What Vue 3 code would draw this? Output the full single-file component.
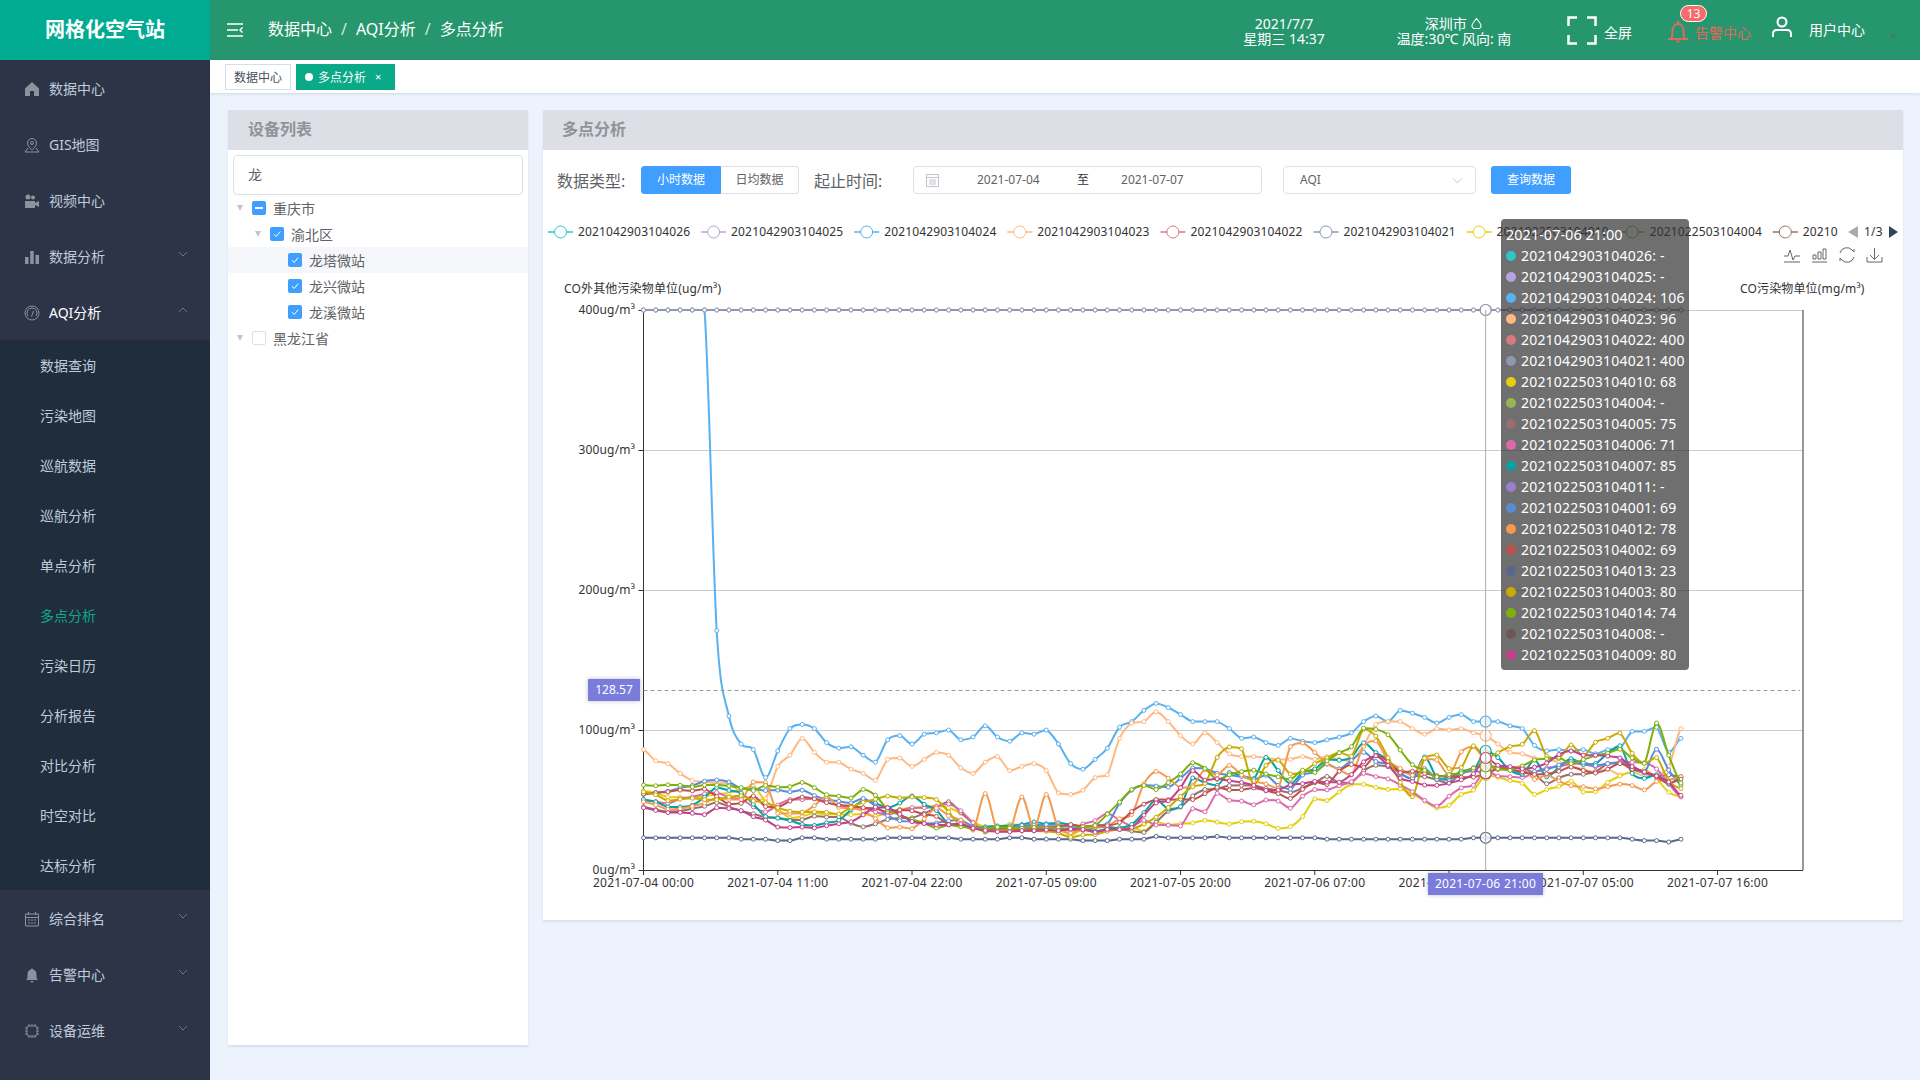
<template>
  <div class="app">
    <aside class="sidebar">
      <div class="logo">网格化空气站</div>
      <template v-for="m in menu" :key="m.label">
        <div class="menu-item" :class="{ open: m.subs }">
          <svg class="micon" :class="m.kind" viewBox="0 0 16 16"><path :d="icons[m.icon]" /></svg>
          <span>{{ m.label }}</span>
          <svg v-if="m.chev" class="chev" viewBox="0 0 10 6"><path :d="m.subs ? 'M1 5L5 1L9 5' : 'M1 1L5 5L9 1'" /></svg>
        </div>
        <div v-if="m.subs" class="submenu">
          <div v-for="s in m.subs" :key="s" class="sub-item" :class="{ on: s === '多点分析' }">{{ s }}</div>
        </div>
      </template>
    </aside>

    <div class="main">
      <header class="topbar">
        <svg class="burger" viewBox="0 0 16 14"><path d="M0 1h16M0 7h11M0 13h16M15.5 4.5L13 7l2.5 2.5" /></svg>
        <nav class="crumbs">
          <span>数据中心</span><i>/</i><span>AQI分析</span><i>/</i><span>多点分析</span>
        </nav>
        <div class="dt">2021/7/7<br />星期三 14:37</div>
        <div class="weather">
          深圳市
          <svg class="cloud" viewBox="0 0 14 14"><path d="M7 1.5L11 7a4 4 0 0 1-1 5.5H4A4 4 0 0 1 3 7z" /></svg>
          <br />温度:30℃ 风向: 南
        </div>
        <svg class="fs" viewBox="0 0 30 29"><path d="M10 1.5H1.5V10M20 1.5h8.500V10M10 27.500H1.500V19M20 27.500h8.500V19" /></svg>
        <span class="fs-label">全屏</span>
        <div class="alarm">
          <svg class="bell" viewBox="0 0 22 24"><path d="M1 20h20M4 20c1.500-2 1.500-4 1.500-8 0-4 2-7 5.500-7s5.500 3 5.500 7c0 4 0 6 1.500 8M11 2v3M9.500 22.500h3" /></svg>
          <span>告警中心</span>
          <b class="badge">13</b>
        </div>
        <svg class="user" viewBox="0 0 20 22"><path d="M10 1.500a4.500 4.500 0 1 1 0 9a4.500 4.500 0 0 1 0-9zM1 21v-3c0-3 2-4 4-4h10c2 0 4 1 4 4v3" /></svg>
        <span class="user-label">用户中心</span>
        <span class="caret"></span>
      </header>

      <div class="tabs">
        <div class="tab">数据中心</div>
        <div class="tab active"><i class="dot"></i><span class="tab-text">多点分析</span><span class="x">×</span></div>
      </div>

      <div class="content">
        <section class="panel left">
          <h3 class="panel-head">设备列表</h3>
          <div class="search">龙</div>
          <div class="tree">
            <div v-for="n in tree" :key="n.label" class="row" :class="['lv' + n.lv, { hover: n.hover }]">
              <span class="arrow"><i v-if="n.arrow"></i></span>
              <span class="cb" :class="n.state">
                <svg v-if="n.state === 'checked'" viewBox="0 0 14 14"><path d="M4 7.200L6.200 9.500L10.200 4.500" /></svg>
              </span>
              <span class="lbl">{{ n.label }}</span>
            </div>
          </div>
        </section>

        <section class="panel right">
          <h3 class="panel-head">多点分析</h3>
          <div class="controls">
            <span class="ctl-label">数据类型:</span>
            <div class="btn-group">
              <span class="seg on">小时数据</span>
              <span class="seg">日均数据</span>
            </div>
            <span class="ctl-label second">起止时间:</span>
            <div class="range">
              <svg class="cal" viewBox="0 0 13 14"><path d="M.5 1.500h12v12H.5zM.5 4.500h12M3 7h7M3 9h7M3 11h7" /></svg>
              <span class="d1">2021-07-04</span>
              <span class="to">至</span>
              <span class="d2">2021-07-07</span>
            </div>
            <div class="select">
              <span>AQI</span>
              <svg class="sel-arrow" viewBox="0 0 12 7"><path d="M1 1l5 5 5-5" /></svg>
            </div>
            <div class="query">查询数据</div>
          </div>

          <div class="chart">
            <svg class="plot" viewBox="543 210 1360 710" width="1360" height="710">
              <g v-for="(l, i) in legend" :key="i">
                <line :x1="l.x" :x2="l.x + 25" y1="232" y2="232" :stroke="l.color" stroke-width="1.500" />
                <circle :cx="l.x + 12.5" cy="232" r="6" fill="#fff" :stroke="l.color" stroke-width="1" />
                <text :x="l.x + 30" y="236" class="t12 lg">{{ l.name }}</text>
              </g>
              <path d="M1858 226v12l-10-6z" fill="#aaa" />
              <text x="1864" y="236" class="t12 lg">1/3</text>
              <path d="M1889 226v12l9-6z" fill="#2f4554" />

              <g class="tool">
                <path d="M1784 262h16M1784 256h4l2-6 3 10 2-4h5" />
                <path d="M1812 262h15M1813 259v-4h3v4zM1818 259v-7h3v7zM1823 259v-10h3v10z" />
                <path d="M1840 253a7 7 0 0 1 12-3l2 2v-3M1854 257a7 7 0 0 1-12 3l-2-2v3" />
                <path d="M1874.500 248v11M1870 255l4.500 4.500 4.500-4.500M1867 257v5h15v-5" />
              </g>

              <text x="564" y="293" class="t12 lg">CO外其他污染物单位(ug/m³)</text>
              <text x="1740" y="293" class="t12 lg">CO污染物单位(mg/m³)</text>

              <line v-for="y in [310, 450, 590, 730]" :key="y" x1="643.500" x2="1803" :y1="y + 0.5" :y2="y + 0.5" stroke="#ccc" />
              <line x1="643.500" x2="643.500" y1="310" y2="870" stroke="#333" />
              <line x1="1803" x2="1803" y1="310" y2="870" stroke="#333" />
              <line x1="643.500" x2="1803" y1="870.500" y2="870.500" stroke="#333" />
              <g v-for="t in yTicks" :key="t.label">
                <line x1="638.500" x2="643.500" :y1="t.y + 0.5" :y2="t.y + 0.5" stroke="#333" />
                <text x="635" :y="t.y + 4" text-anchor="end" class="t12 ay">{{ t.label }}</text>
              </g>
              <g v-for="t in xTicks" :key="t.label">
                <line :x1="t.x" :x2="t.x" y1="870" y2="875" stroke="#333" />
                <text :x="t.x" y="887" text-anchor="middle" class="t12 ax">{{ t.label }}</text>
              </g>

              <g v-for="s in series" :key="s.color" fill="none">
                <path :d="s.path" :stroke="s.color" stroke-width="2" />
                <circle v-for="p in s.points" :key="p[0]" :cx="p[0]" :cy="p[1]" r="2" fill="#fff" :stroke="s.color" stroke-width="1" />
              </g>

              <line x1="643.500" x2="1800" y1="690.500" y2="690.500" stroke="#999" stroke-dasharray="4 3" />
              <g v-for="s in series" :key="'h' + s.color">
                <circle :cx="cursorX" :cy="s.hover" r="5.500" fill="#fff" fill-opacity="0.8" :stroke="s.color" stroke-width="1.200" />
              </g>
              <line :x1="cursorX" :x2="cursorX" y1="310" y2="870" stroke="#aaa" />

              <rect x="588" y="679" width="52" height="22" fill="#7b7bdc" class="pill" />
              <text x="614" y="694" text-anchor="middle" class="t12 white">128.57</text>
              <rect x="1428" y="873" width="115" height="22" fill="#7b7bdc" class="pill" />
              <text x="1485.500" y="888" text-anchor="middle" class="t12 white wide">2021-07-06 21:00</text>
            </svg>

            <div class="tooltip">
              <div class="tip-title">2021-07-06 21:00</div>
              <div v-for="r in tipRows" :key="r[0]" class="tip-row">
                <i :style="{ background: r[2] }"></i>{{ r[0] }}: {{ r[1] }}
              </div>
            </div>
          </div>
        </section>
      </div>
    </div>
  </div>
</template>

<script setup>
const icons = {
  home: 'M8 1L1 7.500V15H6V10H10V15H15V7.500Z',
  pin: 'M8 1.500a4.500 4.500 0 0 1 4.500 4.500c0 2.500-2.500 5-4.500 7-2-2-4.500-4.500-4.500-7A4.500 4.500 0 0 1 8 1.500zM8 4.500a1.500 1.500 0 1 0 0 3a1.500 1.500 0 0 0 0-3zM4 11L1 15H15L12 11',
  video: 'M1 8h10v7H1zM11 10l4-2v6l-4-2zM4 1.500a2.500 2.500 0 1 1 0 5a2.500 2.500 0 0 1 0-5zM9 2.500a2 2 0 1 1 0 4a2 2 0 0 1 0-4z',
  bars: 'M1 8h3.500v7H1zM6.200 2h3.500v13H6.200zM11.500 6H15v9h-3.500z',
  gauge: 'M8 1a7 7 0 1 1 0 14a7 7 0 0 1 0-14zM8 3a5 5 0 0 0-4 8M8 3a5 5 0 0 1 4 8M7.500 11.500L9.500 6',
  calendar: 'M1.500 3h13v12h-13zM1.500 6.500h13M4.500 1v3M11.500 1v3M4 9h2M7 9h2M10 9h2M4 12h2M7 12h2M10 12h2',
  bell: 'M8 1.500c-.6 0-1 .4-1 1C4.500 3.200 3.500 5 3.500 7.500V11L2 13h12l-1.500-2V7.500C12.500 5 11.500 3.200 9 2.500c0-.6-.4-1-1-1zM6.500 14h3a1.500 1.500 0 0 1-3 0z',
  chip: 'M4 3h8l1 1v8l-1 1H4l-1-1V4zM1 5h2M1 8h2M1 11h2M13 5h2M13 8h2M13 11h2M5 1v2M8 1v2M11 1v2M5 13v2M8 13v2M11 13v2'
}

const menu = [
  { label: '数据中心', icon: 'home', kind: 'fill' },
  { label: 'GIS地图', icon: 'pin', kind: 'line' },
  { label: '视频中心', icon: 'video', kind: 'fill' },
  { label: '数据分析', icon: 'bars', kind: 'fill', chev: true },
  {
    label: 'AQI分析',
    icon: 'gauge',
    kind: 'line',
    chev: true,
    subs: ['数据查询', '污染地图', '巡航数据', '巡航分析', '单点分析', '多点分析', '污染日历', '分析报告', '对比分析', '时空对比', '达标分析']
  },
  { label: '综合排名', icon: 'calendar', kind: 'line', chev: true },
  { label: '告警中心', icon: 'bell', kind: 'fill', chev: true },
  { label: '设备运维', icon: 'chip', kind: 'line', chev: true },
  { label: '', icon: 'calendar', kind: 'line' }
]

const tree = [
  { label: '重庆市', lv: 1, arrow: true, state: 'half' },
  { label: '渝北区', lv: 2, arrow: true, state: 'checked' },
  { label: '龙塔微站', lv: 3, state: 'checked', hover: true },
  { label: '龙兴微站', lv: 3, state: 'checked' },
  { label: '龙溪微站', lv: 3, state: 'checked' },
  { label: '黑龙江省', lv: 1, arrow: true, state: 'empty' }
]

const legendColors = ['#2ec7c9', '#b6a2de', '#5ab1ef', '#ffb980', '#d87a80', '#8d98b3', '#e5cf0d', '#97b552', '#95706d']
const legendNames = ['2021042903104026', '2021042903104025', '2021042903104024', '2021042903104023', '2021042903104022', '2021042903104021', '2021022503104010', '2021022503104004', '20210']
const legend = legendNames.map((name, i) => ({ name, color: legendColors[i], x: 548 + i * 153.1 }))

const yTicks = [
  { label: '400ug/m³', y: 310 },
  { label: '300ug/m³', y: 450 },
  { label: '200ug/m³', y: 590 },
  { label: '100ug/m³', y: 730 },
  { label: '0ug/m³', y: 870 }
]

const step = 1159.5 / 95
const X0 = 643.5
const cursorX = X0 + 69 * step
const xLabels = ['07-04 00:00', '07-04 11:00', '07-04 22:00', '07-05 09:00', '07-05 20:00', '07-06 07:00', '07-06 18:00', '07-07 05:00', '07-07 16:00']
const xTicks = xLabels.map((l, i) => ({ label: '2021-' + l, x: X0 + i * 11 * step }))

function jitter(i, seed) {
  const v = Math.sin(i * 12.9898 + seed * 78.233) * 43758.5453
  return (v - Math.floor(v)) * 2 - 1
}
function line(pairs, seed, amp = 1.5) {
  const out = []
  for (let i = 0; i < 86; i++) {
    let k = 0
    while (k < pairs.length - 4 && pairs[k + 2] < i) k += 2
    const a = pairs[k]
    const b = pairs[k + 2]
    const t = Math.min(1, Math.max(0, (i - a) / (b - a)))
    const base = pairs[k + 1] + (pairs[k + 3] - pairs[k + 1]) * t
    out.push(i === 69 ? base : base + amp * jitter(i, seed))
  }
  return out
}

const blue = [400, 400, 400, 400, 400, 400, 171, 110, 90, 86, 66, 85, 101, 104, 101, 91, 87, 88, 82, 77, 93, 96, 90, 97, 98, 100, 93, 95, 103, 95, 92, 98, 97, 100, 90, 76, 72, 79, 87, 102, 106, 114, 119, 116, 111, 106, 106, 106, 101, 94, 95, 91, 89, 94, 92, 91, 93, 95, 98, 106, 110, 106, 114, 112, 109, 105, 109, 111, 106, 106, 106, 103, 101, 89, 85, 86, 85, 86, 83, 86, 87, 99, 99, 102, 84, 94]
const peach = [86, 78, 76, 69, 64, 63, 62, 62, 55, 50, 51, 74, 82, 94, 84, 77, 77, 72, 69, 64, 79, 80, 74, 79, 84, 82, 73, 69, 77, 81, 71, 74, 76, 71, 55, 54, 57, 66, 68, 94, 105, 106, 113, 106, 96, 90, 98, 91, 83, 81, 81, 80, 79, 79, 81, 79, 81, 79, 78, 89, 104, 106, 106, 101, 97, 101, 100, 101, 98, 96, 90, 84, 83, 80, 79, 77, 74, 72, 70, 72, 68, 70, 67, 68, 74, 101]
const flat400 = new Array(86).fill(400)
const slate = [23, 23, 23, 23, 23, 23, 23, 23, 22, 22, 22, 21, 21, 23, 23, 22, 22, 22, 22, 22, 23, 23, 23, 23, 23, 23, 22, 22, 22, 22, 23, 23, 22, 22, 22, 22, 21, 21, 21, 22, 22, 22, 24, 23, 23, 23, 23, 24, 23, 23, 23, 23, 23, 23, 23, 23, 22, 22, 22, 22, 22, 22, 22, 22, 22, 22, 22, 22, 23, 23, 23, 23, 23, 23, 23, 23, 23, 23, 23, 23, 23, 22, 21, 21, 20, 22]

const raw = [
  ['#5ab1ef', blue],
  ['#ffb980', peach],
  ['#d87a80', flat400],
  ['#8d98b3', flat400],
  ['#e5cf0d', line([0,57,2,52,5,52,7,55,9,60,10,50,12,37,14,40,17,40,19,38,22,45,25,45,26,40,28,30,30,33,32,31,34,30,35,26,36,29,38,31,40,30,41,27,42,34,43,33,45,33,46,35,47,35,48,33,50,34,51,33,52,30,53,31,54,39,55,50,56,50,57,56,58,61,59,61,60,59,62,57,64,50,65,44,66,47,67,53,68,57,69,68,70,66,72,62,73,55,74,57,75,60,76,64,77,55,78,55,79,63,80,68,82,72,83,65,84,55,85,52], 1, 1)],
  ['#95706d', line([0,46,2,42,4,43,6,48,8,42,10,38,12,35,14,38,16,37,18,30,20,36,22,38,25,48,28,27,30,30,33,29,36,28,38,31,40,28,41,27,42,35,43,42,44,45,45,52,46,58,47,57,48,60,50,60,52,57,53,56,55,62,56,66,57,62,58,63,59,70,60,74,62,72,63,68,65,64,66,62,67,70,69,75,70,73,72,72,73,68,74,62,76,68,78,70,79,75,80,77,82,70,83,68,85,66], 2, 1)],
  ['#dc69aa', line([0,50,2,48,4,52,6,55,8,50,10,42,12,50,14,52,16,46,18,45,20,40,22,44,24,46,25,48,28,28,30,30,33,32,35,28,37,36,38,40,40,32,41,35,42,33,43,33,44,32,45,44,46,42,47,55,48,50,49,49,50,47,51,50,52,49,53,44,54,52,55,57,56,58,57,60,58,63,59,68,60,67,61,66,62,60,63,55,64,49,65,45,66,53,67,58,68,60,69,71,70,68,72,66,74,72,76,76,78,74,80,78,82,76,83,72,84,62,85,52], 3, 1)],
  ['#07a2a4', line([0,51,2,45,4,47,6,58,8,56,10,38,12,35,14,32,16,36,18,50,20,44,22,52,24,42,25,33,27,30,30,32,33,34,35,32,37,28,40,32,42,50,43,44,44,46,45,65,46,62,47,60,48,70,50,66,51,80,52,72,53,62,54,70,55,72,56,80,57,78,58,80,59,90,60,84,61,78,62,70,63,65,64,80,65,66,66,65,67,70,68,72,69,85,70,80,71,72,72,68,73,78,74,66,75,74,76,80,77,76,78,76,79,84,80,88,81,70,82,66,83,68,84,62,85,66], 4, 1)],
  ['#588dd5', line([0,55,3,58,4,61,5,64,6,64,7,62,8,58,10,56,11,57,12,55,13,57,15,50,17,48,18,52,19,45,20,38,21,35,23,33,24,33,26,36,28,27,30,30,32,32,34,32,36,30,38,32,39,48,40,58,41,60,42,60,43,60,44,66,45,72,46,72,47,70,48,68,49,66,50,64,51,68,52,60,53,58,54,68,55,70,56,76,57,72,58,78,59,85,60,78,61,76,62,70,63,66,64,72,65,64,66,66,67,68,68,70,69,69,70,72,72,70,74,72,76,78,78,74,80,76,82,70,83,86,84,72,85,60], 5, 1)],
  ['#f5994e', line([0,48,2,44,4,45,6,52,8,50,9,63,10,62,11,40,13,40,15,52,16,45,18,42,20,30,22,30,24,44,26,35,27,28,28,54,29,28,30,28,31,52,32,30,33,54,34,30,35,27,37,30,38,32,40,40,41,62,42,70,43,66,44,58,45,60,46,72,47,68,48,74,49,68,50,64,52,58,53,88,54,90,55,84,56,76,57,72,58,68,59,88,60,92,61,78,62,72,63,68,64,80,65,78,66,68,67,84,68,88,69,78,70,72,72,74,73,64,74,68,76,60,78,58,80,62,82,58,83,64,85,66], 6, 0.8)],
  ['#c05050', line([0,55,1,56,2,55,3,57,4,56,5,58,6,52,7,48,8,47,9,52,10,46,11,44,12,50,13,52,14,50,16,46,18,44,20,42,22,43,24,38,25,32,27,30,30,30,33,30,35,32,37,31,39,34,40,42,41,47,42,50,43,51,45,51,47,60,48,57,50,58,52,54,53,52,55,62,56,62,57,70,58,75,59,73,60,82,61,78,62,70,64,70,66,66,68,67,69,69,70,72,72,70,74,68,76,74,78,70,80,76,82,70,84,62,85,64], 7, 1)],
  ['#59678c', slate],
  ['#c9ab00', line([0,56,2,50,4,52,6,50,8,53,9,50,10,48,12,42,14,42,16,40,18,48,20,52,22,52,24,50,26,32,28,27,30,28,33,28,35,24,37,26,40,30,41,32,42,38,43,44,45,60,46,62,47,80,48,88,49,86,50,60,51,74,52,78,53,68,54,70,55,76,56,80,57,84,58,82,59,100,60,96,61,80,62,62,63,52,64,80,65,82,66,72,67,74,68,88,69,80,70,84,71,88,72,90,73,100,74,82,75,80,76,90,77,82,78,92,79,94,80,98,81,84,82,76,83,80,84,64,85,58], 8, 0.8)],
  ['#7eb00a', line([0,60,2,61,4,60,6,61,8,59,9,57,10,60,12,59,13,62,15,54,17,52,18,58,19,53,20,44,22,36,24,30,25,32,27,30,30,30,33,30,35,29,37,32,39,48,40,58,41,60,42,57,44,68,45,76,46,72,47,64,48,68,49,70,50,72,52,66,53,64,54,72,55,70,56,78,58,88,59,102,60,100,61,96,63,76,65,66,67,70,69,74,71,72,73,78,75,80,76,76,78,82,80,86,81,80,82,76,83,105,84,82,85,62], 9, 0.8)],
  ['#c14089', line([0,44,2,40,4,41,5,40,6,44,7,44,8,42,10,36,11,30,13,30,15,31,17,34,18,40,19,45,20,44,22,35,24,32,26,32,27,30,30,27,33,28,35,29,37,27,40,30,41,40,42,48,43,50,44,58,45,70,46,64,47,66,48,64,49,62,50,60,51,56,52,58,54,62,55,64,56,62,57,62,58,68,59,78,60,82,61,74,62,66,64,60,66,62,68,68,69,80,70,74,72,72,74,76,75,82,76,84,78,82,80,80,81,74,83,68,84,62,85,53], 10, 1)]
]

const yOf = (v) => 870 - v * 1.4

function smooth(pts) {
  let d = `M${pts[0][0].toFixed(1)} ${pts[0][1].toFixed(1)}`
  const clamp = (v, a, b) => Math.min(Math.max(a, b), Math.max(Math.min(a, b), v))
  for (let i = 0; i < pts.length - 1; i++) {
    const p0 = pts[Math.max(0, i - 1)]
    const p1 = pts[i]
    const p2 = pts[i + 1]
    const p3 = pts[Math.min(pts.length - 1, i + 2)]
    const c1y = clamp(p1[1] + (p2[1] - p0[1]) / 6, p1[1], p2[1])
    const c2y = clamp(p2[1] - (p3[1] - p1[1]) / 6, p1[1], p2[1])
    d += `C${(p1[0] + step / 3).toFixed(1)} ${c1y.toFixed(1)} ${(p2[0] - step / 3).toFixed(1)} ${c2y.toFixed(1)} ${p2[0].toFixed(1)} ${p2[1].toFixed(1)}`
  }
  return d
}

const series = raw.map(([color, vals]) => {
  const points = vals.map((v, i) => [X0 + i * step, yOf(v)])
  return { color, points, path: smooth(points), hover: yOf(vals[69]) }
})

const tipRows = [
  ['2021042903104026', '-', '#2ec7c9'],
  ['2021042903104025', '-', '#b6a2de'],
  ['2021042903104024', '106', '#5ab1ef'],
  ['2021042903104023', '96', '#ffb980'],
  ['2021042903104022', '400', '#d87a80'],
  ['2021042903104021', '400', '#8d98b3'],
  ['2021022503104010', '68', '#e5cf0d'],
  ['2021022503104004', '-', '#97b552'],
  ['2021022503104005', '75', '#95706d'],
  ['2021022503104006', '71', '#dc69aa'],
  ['2021022503104007', '85', '#07a2a4'],
  ['2021022503104011', '-', '#9a7fd1'],
  ['2021022503104001', '69', '#588dd5'],
  ['2021022503104012', '78', '#f5994e'],
  ['2021022503104002', '69', '#c05050'],
  ['2021022503104013', '23', '#59678c'],
  ['2021022503104003', '80', '#c9ab00'],
  ['2021022503104014', '74', '#7eb00a'],
  ['2021022503104008', '-', '#6f5553'],
  ['2021022503104009', '80', '#c14089']
]
</script>

<style>
html, body { margin: 0; height: 100%; overflow: hidden; background: #ecf3fd; }
</style>

<style scoped>
.app {
  display: flex;
  width: 1920px;
  height: 1080px;
  overflow: hidden;
  font-family: "Noto Sans", "Noto Sans CJK SC", sans-serif;
  font-size: 14px;
  line-height: 1.2;
  background: #ecf3fd;
}
.sidebar { width: 210px; flex: none; background: #2d3448; color: #bfcbd9; overflow: hidden; }
.logo {
  height: 60px;
  background: #00ab91;
  color: #fff;
  font-size: 20px;
  font-weight: 700;
  line-height: 60px;
  text-align: center;
}
.menu-item { height: 56px; display: flex; align-items: center; padding: 2px 22px 0 24px; box-sizing: border-box; }
.menu-item.open { color: #fff; }
.micon { width: 16px; height: 16px; margin-right: 9px; flex: none; }
.micon.fill path { fill: #8f929b; }
.micon.line path { fill: none; stroke: #8f929b; stroke-width: 1; }
.chev { width: 10px; height: 6px; margin-left: auto; margin-top: -6px; }
.chev path { fill: none; stroke: #6f7585; stroke-width: 1; }
.submenu { background: #1f2d3d; }
.sub-item { height: 50px; line-height: 52px; padding-left: 40px; }
.sub-item.on { color: #11a983; }

.main { flex: 1; display: flex; flex-direction: column; min-width: 0; }
.topbar { height: 60px; flex: none; background: #26966e; color: #fff; display: flex; align-items: center; padding-right: 24px; }
.burger { width: 16px; height: 14px; margin-left: 17px; }
.burger path { fill: none; stroke: #fff; stroke-width: 1.500; }
.crumbs { margin-left: 25px; font-size: 16px; display: flex; align-items: center; flex: 1; }
.crumbs i { font-style: normal; margin: 0 9px; color: #cfe5dc; }
.dt { width: 120px; text-align: center; font-size: 14px; line-height: 15px; margin-top: 1px; }
.weather { width: 160px; margin-left: 30px; text-align: center; font-size: 14px; line-height: 15px; margin-top: 1px; }
.cloud { width: 13px; height: 13px; vertical-align: -1px; }
.cloud path { fill: none; stroke: #fff; stroke-width: 1.100; }
.fs { width: 30px; height: 29px; margin-left: 33px; }
.fs path { fill: none; stroke: #fff; stroke-width: 2.500; }
.fs-label { margin-left: 7px; margin-top: 6px; }
.alarm { position: relative; display: flex; align-items: center; margin-left: 35px; color: #e3675a; margin-top: 6px; }
.bell { width: 22px; height: 24px; margin-right: 6px; margin-top: -5px; }
.bell path { fill: none; stroke: #dc6b5c; stroke-width: 2; }
.badge {
  position: absolute;
  left: 13px;
  top: -19px;
  width: 27px;
  height: 17px;
  box-sizing: border-box;
  background: #f56c6c;
  border: 1px solid #fff;
  border-radius: 9px;
  color: #fff;
  font-size: 12px;
  font-weight: 400;
  line-height: 15px;
  text-align: center;
}
.user { width: 20px; height: 22px; margin-left: 21px; margin-top: -6px; }
.user path { fill: none; stroke: #fff; stroke-width: 2; }
.user-label { margin-left: 17px; }
.caret { width: 0; height: 0; margin-left: 25px; margin-top: 12px; border: 3.500px solid transparent; border-top: 5px solid #3f7f6b; border-bottom: 0; }

.tabs {
  height: 33px;
  flex: none;
  background: #fff;
  box-shadow: 0 1px 3px rgba(0, 21, 41, 0.12);
  display: flex;
  align-items: flex-start;
  padding: 4px 0 0 15px;
  box-sizing: border-box;
  gap: 5px;
  position: relative;
}
.tab {
  height: 26px;
  line-height: 26px;
  box-sizing: border-box;
  border: 1px solid #d8dce5;
  width: 66px;
  text-align: center;
  font-size: 12px;
  color: #495060;
}
.tab.active {
  width: 99px;
  background: #0aa987;
  border-color: #0aa987;
  color: #fff;
  display: flex;
  align-items: center;
  padding-left: 8px;
}
.tab-text { padding-top: 1px; }
.dot { width: 8px; height: 8px; border-radius: 50%; background: #fff; margin-right: 5px; }
.x { margin-left: 9px; font-size: 11px; }

.content { flex: 1; display: flex; align-items: flex-start; gap: 15px; padding: 17px 17px 0 18px; min-height: 0; }
.panel { background: #fff; box-shadow: 0 2px 2px rgba(0, 0, 0, 0.08); }
.panel.left { width: 300px; height: 935px; flex: none; }
.panel.right { flex: 1; height: 810px; min-width: 0; }
.panel-head {
  margin: 0;
  height: 40px;
  line-height: 38px;
  background: #dcdfe6;
  color: #909399;
  font-size: 16px;
  font-weight: 700;
  padding-left: 20px;
}
.right .panel-head { padding-left: 19px; }
.search {
  margin: 5px 5px 0;
  height: 40px;
  box-sizing: border-box;
  border: 1px solid #dcdfe6;
  border-radius: 4px;
  padding-left: 14px;
  line-height: 38px;
  color: #606266;
}
.row { height: 26px; display: flex; align-items: center; color: #606266; }
.row.hover { background: #f5f7fa; }
.lbl { padding-top: 2px; }
.lv2 { padding-left: 18px; }
.lv3 { padding-left: 36px; }
.arrow { width: 24px; display: flex; justify-content: center; }
.arrow i { width: 0; height: 0; border: 3.500px solid transparent; border-top: 6px solid #c0c4cc; border-bottom: 0; }
.cb { width: 14px; height: 14px; box-sizing: border-box; border-radius: 2px; margin-right: 7px; flex: none; position: relative; display: block; }
.cb svg { display: block; width: 14px; height: 14px; }
.cb path { fill: none; stroke: #fff; stroke-width: 1; }
.cb.checked { background: #409eff; }
.cb.half { background: #409eff; }
.cb.half::after { content: ""; position: absolute; left: 3px; right: 3px; top: 6px; height: 2px; background: #fff; }
.cb.empty { background: #fff; border: 1px solid #dcdfe6; }

.controls { display: flex; align-items: center; padding: 16px 0 0 14px; height: 28px; }
.ctl-label { font-size: 16px; color: #606266; margin-right: 15px; margin-top: 3px; width: 69px; white-space: nowrap; }
.ctl-label.second { margin-left: 15px; margin-right: 30px; }
.btn-group { display: flex; height: 28px; width: 158px; flex: none; box-sizing: border-box; }
.seg {
  flex: 1;
  text-align: center;
  font-size: 12px;
  line-height: 26px;
  color: #606266;
  border: 1px solid #dcdfe6;
  border-left: 0;
  border-radius: 0 3px 3px 0;
}
.seg.on { flex: none; width: 80px; background: #409eff; border: 1px solid #409eff; color: #fff; border-radius: 3px 0 0 3px; box-sizing: border-box; }
.range {
  width: 349px;
  flex: none;
  height: 28px;
  box-sizing: border-box;
  border: 1px solid #dcdfe6;
  border-radius: 4px;
  display: flex;
  align-items: center;
  font-size: 12px;
  color: #606266;
  padding-left: 12px;
}
.cal { width: 13px; height: 14px; }
.cal path { fill: none; stroke: #c0c4cc; stroke-width: 1; }
.d1 { margin-left: 38px; width: 62px; white-space: nowrap; }
.to { margin-left: 38px; color: #303133; }
.d2 { margin-left: 32px; white-space: nowrap; }
.select {
  margin-left: 21px;
  width: 193px;
  flex: none;
  height: 28px;
  box-sizing: border-box;
  border: 1px solid #dcdfe6;
  border-radius: 4px;
  display: flex;
  align-items: center;
  justify-content: space-between;
  padding: 0 12px 0 16px;
  font-size: 12px;
  color: #606266;
}
.sel-arrow { width: 11px; height: 7px; }
.sel-arrow path { fill: none; stroke: #c0c4cc; stroke-width: 1; }
.query {
  margin-left: 15px;
  width: 80px;
  flex: none;
  height: 28px;
  line-height: 28px;
  border-radius: 3px;
  background: #409eff;
  color: #fff;
  text-align: center;
  font-size: 12px;
}
.chart { position: relative; margin-top: 16px; height: 710px; }
.plot { display: block; }
.t12 { font-size: 12px; }
.lg { fill: #333; letter-spacing: 0.15px; }
.ax { fill: #333; letter-spacing: 0.3px; }
.ay { fill: #333; letter-spacing: 0.15px; }
.white { fill: #fff; }
.wide { letter-spacing: 0.3px; }
.pill { filter: drop-shadow(0 0 2px rgba(0, 0, 0, 0.25)); }
.tool path { fill: none; stroke: #666; stroke-width: 1; }
.tooltip {
  position: absolute;
  left: 958px;
  top: 9px;
  width: 188px;
  height: 451px;
  box-sizing: border-box;
  padding: 5px;
  background: rgba(50, 50, 50, 0.7);
  border-radius: 4px;
  color: #fff;
  font-size: 14px;
  line-height: 21px;
  letter-spacing: 0.2px;
  white-space: nowrap;
}
.tip-title { font-size: 14.5px; letter-spacing: 0; }
.tip-row { display: flex; align-items: center; white-space: pre; }
.tip-row i { width: 10px; height: 10px; border-radius: 50%; margin-right: 5px; flex: none; }
</style>
